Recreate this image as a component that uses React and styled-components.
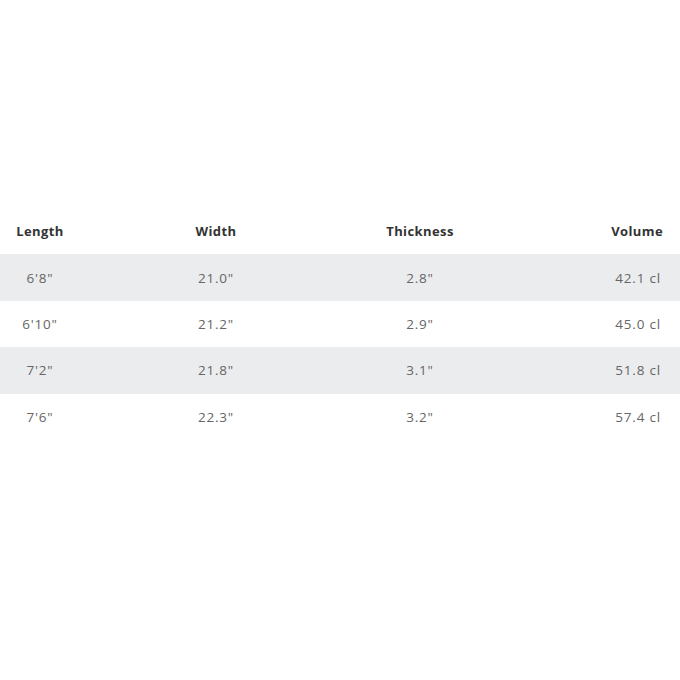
import React from 'react';
import styled, { createGlobalStyle } from 'styled-components';

const GlobalStyle = createGlobalStyle`
  body {
    margin: 0;
    background: #ffffff;
    font-family: "Open Sans", "Noto Sans", sans-serif;
  }
`;

const rows = [
  ['6\'8"', '21.0"', '2.8"', '42.1 cl'],
  ['6\'10"', '21.2"', '2.9"', '45.0 cl'],
  ['7\'2"', '21.8"', '3.1"', '51.8 cl'],
  ['7\'6"', '22.3"', '3.2"', '57.4 cl'],
];

const headers = ['Length', 'Width', 'Thickness', 'Volume'];

const App = () => {
  return (
    <Page>
      <GlobalStyle />
      <Table>
        <Row>
          {headers.map((h, i) => (
            <HeadCell key={h} $last={i === 3}>{h}</HeadCell>
          ))}
        </Row>
        {rows.map((r, idx) => (
          <Row key={idx} $striped={idx % 2 === 0}>
            {r.map((v, i) => (
              <Cell key={i} $last={i === 3}>{v}</Cell>
            ))}
          </Row>
        ))}
      </Table>
    </Page>
  );
};

export default App;

const Page = styled.div`
  width: 680px;
  height: 680px;
  padding-top: 208px;
  box-sizing: border-box;
`;

const Table = styled.div`
  display: flex;
  flex-direction: column;
`;

const Row = styled.div`
  display: grid;
  grid-template-columns: 80px 272px 136px 1fr;
  align-items: center;
  height: 46.4px;
  background: ${p => (p.$striped ? '#ebecee' : 'transparent')};
`;

const HeadCell = styled.div`
  text-align: ${p => (p.$last ? 'right' : 'center')};
  padding-right: ${p => (p.$last ? '17px' : '0')};
  font-size: 13px;
  font-weight: 700;
  letter-spacing: 0.4px;
  color: #333333;
`;

const Cell = styled.div`
  text-align: ${p => (p.$last ? 'right' : 'center')};
  padding-right: ${p => (p.$last ? '19px' : '0')};
  font-size: 13.5px;
  letter-spacing: 0.8px;
  color: #666666;
`;
